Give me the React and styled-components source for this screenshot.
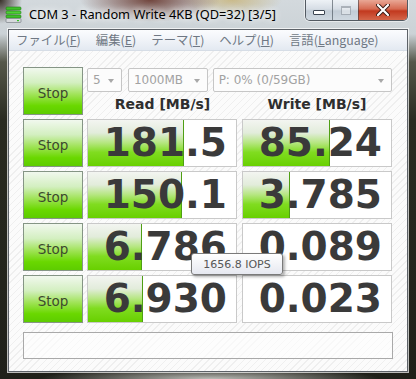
import React from 'react';
import styled, { createGlobalStyle } from 'styled-components';

const GlobalStyle = createGlobalStyle`
  html, body {
    margin: 0;
    padding: 0;
  }
  body {
    width: 416px;
    height: 379px;
    overflow: hidden;
    background: #26271e;
  }
`;

const Window = styled.div`
  position: relative;
  width: 416px;
  height: 379px;
  box-sizing: border-box;
  display: flex;
  flex-direction: column;
  font-family: "Noto Sans", "DejaVu Sans", sans-serif;
  background:
    radial-gradient(70px 22px at 150px 0, rgba(96, 44, 34, 0.85), rgba(96, 44, 34, 0)),
    radial-gradient(50px 16px at 232px 0, rgba(196, 166, 84, 0.6), rgba(196, 166, 84, 0)),
    radial-gradient(22px 24px at 0 0, rgba(40, 30, 22, 0.9), rgba(40, 30, 22, 0)),
    radial-gradient(170px 12px at 210px 379px, rgba(205, 205, 200, 0.9), rgba(205, 205, 200, 0)),
    linear-gradient(to bottom, #d3d9dd 0, #cbd2d6 34px, #55574a 62px, #2a2b21 120px, #1f2019 100%);
`;

const TitleBar = styled.div`
  height: 29px;
  display: flex;
  align-items: flex-start;
  flex-shrink: 0;
`;

const AppIcon = styled.svg`
  width: 17px;
  height: 17px;
  margin: 6px 0 0 5px;
`;

const TitleText = styled.div`
  margin: 5px 0 0 7px;
  font-size: 12.8px;
  line-height: 18px;
  color: #000;
  text-shadow: 0 0 6px rgba(255, 255, 255, 0.95), 0 0 10px rgba(255, 255, 255, 0.8);
  white-space: nowrap;
`;

const CaptionGroup = styled.div`
  margin-left: auto;
  margin-right: 8px;
  display: flex;
  height: 20px;
  border: 1px solid rgba(40, 48, 58, 0.75);
  border-top: none;
  border-radius: 0 0 5px 5px;
  overflow: hidden;
  box-shadow: 0 0 0 1px rgba(255, 255, 255, 0.5);
`;

const CaptionButton = styled.div`
  width: ${p => p.$w}px;
  display: flex;
  align-items: center;
  justify-content: center;
  border-left: ${p => (p.$first ? 'none' : '1px solid rgba(50, 60, 70, 0.55)')};
  background: ${p =>
    p.$close
      ? 'linear-gradient(to bottom, #e9a795 0%, #d66a52 45%, #c2391f 55%, #d4664a 100%)'
      : 'linear-gradient(to bottom, #eef2f6 0%, #d6dde5 45%, #c2ccd6 55%, #cfd8e0 100%)'};
`;

const MinGlyph = styled.div`
  width: 10px;
  height: 3px;
  margin-top: 5px;
  background: #fff;
  border: 1px solid #3b4450;
  border-radius: 1px;
`;

const MaxGlyph = styled.div`
  width: 8px;
  height: 6px;
  border: 1px solid rgba(120, 130, 140, 0.55);
  border-top-width: 2px;
  background: rgba(255, 255, 255, 0.35);
`;

const Client = styled.div`
  flex: 1;
  margin: 0 8px 7px 8px;
  display: flex;
  flex-direction: column;
  border: 1px solid #5d6268;
  box-shadow: 0 0 0 1px rgba(255, 255, 255, 0.7);
  min-height: 0;
`;

const MenuBar = styled.div`
  height: 20px;
  display: flex;
  align-items: center;
  gap: 15px;
  padding-left: 7px;
  background: linear-gradient(to bottom, #fbfcfe 0%, #f0f3f8 50%, #e3e9f1 100%);
  border-bottom: 1px solid #d6dde6;
  font-family: "Noto Sans CJK JP", "Noto Sans", sans-serif;
  font-size: 12.4px;
  color: #6f7884;
  flex-shrink: 0;
`;

const MenuItem = styled.span`
  white-space: nowrap;
  u {
    text-decoration: underline;
    text-underline-offset: 1px;
  }
`;

const Content = styled.div`
  flex: 1;
  padding: 16px 0 0 14px;
  background: repeating-linear-gradient(135deg, #fbfbfb 0px, #fbfbfb 4px, #efefef 4px, #efefef 5px);
`;

const Board = styled.div`
  display: grid;
  grid-template-columns: 60px 151px 150px;
  grid-auto-rows: 48px;
  column-gap: 4px;
  row-gap: 4px;
`;

const StopButton = styled.div`
  box-sizing: border-box;
  display: flex;
  align-items: center;
  justify-content: center;
  padding-top: 3px;
  border: 1px solid #859585;
  background: linear-gradient(to bottom, #f1f8ee 0%, #d3efc0 32%, #9fe356 58%, #6ad800 82%, #5dcc00 100%);
  color: #3d4a2e;
  font-family: "Comic Sans MS", "DejaVu Sans", sans-serif;
  font-size: 13.5px;
`;

const TopPanel = styled.div`
  grid-column: 2 / span 2;
  display: flex;
  flex-direction: column;
`;

const ComboRow = styled.div`
  display: flex;
  margin-top: 1px;
  height: 24px;
`;

const Combo = styled.div`
  box-sizing: border-box;
  width: ${p => p.$w}px;
  margin-left: ${p => p.$ml || 0}px;
  display: flex;
  align-items: center;
  padding: 0 0 0 5px;
  border: 1px solid #c6c6c6;
  border-radius: 2px;
  background: #fcfcfc;
  color: #a2a2a2;
  font-family: "DejaVu Sans", sans-serif;
  font-size: 12px;
  span {
    flex: 1;
    white-space: nowrap;
  }
  &::after {
    content: "";
    margin: 2px 7px 0 4px;
    border-left: 3.5px solid transparent;
    border-right: 3.5px solid transparent;
    border-top: 4px solid #a8a8a8;
  }
`;

const HeaderRow = styled.div`
  display: grid;
  grid-template-columns: 151px 150px;
  column-gap: 4px;
  margin-top: 4px;
`;

const Header = styled.div`
  text-align: center;
  font-family: "DejaVu Sans", sans-serif;
  font-weight: bold;
  font-size: 14px;
  line-height: 17px;
  color: #2e2e2e;
`;

const Cell = styled.div`
  box-sizing: border-box;
  width: 150px;
  border: 1px solid #c9c9c9;
  padding-right: 9px;
  text-align: right;
  font-family: "DejaVu Sans", sans-serif;
  font-weight: bold;
  font-size: 39px;
  line-height: 45px;
  color: #3a3a3a;
  background:
    linear-gradient(#4f9f14, #4f9f14) no-repeat ${p => Math.max(p.$fill - 1, 0)}px 0 / ${p => (p.$fill ? 1 : 0)}px 100%,
    linear-gradient(to bottom, #f3f5f1 0%, #e2ecdb 28%, #b4e67e 50%, #80dc20 70%, #68d000 100%) no-repeat 0 0 / ${p => p.$fill}px 100%,
    #ffffff;
`;

const StatusBox = styled.div`
  box-sizing: border-box;
  width: 370px;
  height: 27px;
  margin-top: 9px;
  border: 1px solid #a9a9a9;
  background: rgba(255, 255, 255, 0.55);
`;

const Tooltip = styled.div`
  position: absolute;
  left: 191px;
  top: 253px;
  box-sizing: border-box;
  width: 92px;
  height: 22px;
  display: flex;
  align-items: center;
  justify-content: center;
  border: 1px solid #7a7a7a;
  border-radius: 3px;
  background: linear-gradient(to bottom, #ffffff 0%, #e6e8f0 100%);
  box-shadow: 2px 2px 3px rgba(0, 0, 0, 0.3);
  color: #575757;
  font-family: "DejaVu Sans", sans-serif;
  font-size: 11px;
`;

const results = [
  { read: '181.5', readFill: 96, write: '85.24', writeFill: 87 },
  { read: '150.1', readFill: 94, write: '3.785', writeFill: 47 },
  { read: '6.786', readFill: 54, write: '0.089', writeFill: 0 },
  { read: '6.930', readFill: 55, write: '0.023', writeFill: 0 },
];

const menus = [
  ['ファイル(', 'F', ')'],
  ['編集(', 'E', ')'],
  ['テーマ(', 'T', ')'],
  ['ヘルプ(', 'H', ')'],
  ['言語(', 'L', 'anguage)'],
];

function App() {
  return (
    <>
      <GlobalStyle />
      <Window>
        <TitleBar>
          <AppIcon viewBox="0 0 17 17">
            <rect x="1" y="1" width="15" height="3" rx="1" fill="#3fbf2a" stroke="#1f7a16" strokeWidth="0.6" />
            <rect x="1" y="5" width="15" height="3" rx="1" fill="#4fd036" stroke="#1f7a16" strokeWidth="0.6" />
            <rect x="1" y="9" width="15" height="3" rx="1" fill="#3fbf2a" stroke="#1f7a16" strokeWidth="0.6" />
            <rect x="1" y="12.5" width="15" height="4" rx="1" fill="#d6d9dc" stroke="#6d7278" strokeWidth="0.6" />
            <rect x="12" y="14" width="2" height="1.2" fill="#36c02a" />
          </AppIcon>
          <TitleText>CDM 3 - Random Write 4KB (QD=32) [3/5]</TitleText>
          <CaptionGroup>
            <CaptionButton $w={26} $first>
              <MinGlyph />
            </CaptionButton>
            <CaptionButton $w={25}>
              <MaxGlyph />
            </CaptionButton>
            <CaptionButton $w={48} $close>
              <svg width="14" height="12" viewBox="0 0 14 12">
                <path d="M2 1 L12 11 M12 1 L2 11" stroke="#3a1a14" strokeWidth="4" strokeLinecap="round" />
                <path d="M2 1 L12 11 M12 1 L2 11" stroke="#ffffff" strokeWidth="2.2" strokeLinecap="round" />
              </svg>
            </CaptionButton>
          </CaptionGroup>
        </TitleBar>

        <Client>
          <MenuBar>
            {menus.map(([a, k, b]) => (
              <MenuItem key={a}>
                {a}
                <u>{k}</u>
                {b}
              </MenuItem>
            ))}
          </MenuBar>

          <Content>
            <Board>
              <StopButton>Stop</StopButton>
              <TopPanel>
                <ComboRow>
                  <Combo $w={35}><span>5</span></Combo>
                  <Combo $w={80} $ml={6}><span>1000MB</span></Combo>
                  <Combo $w={180} $ml={5}><span>P: 0% (0/59GB)</span></Combo>
                </ComboRow>
                <HeaderRow>
                  <Header>Read [MB/s]</Header>
                  <Header>Write [MB/s]</Header>
                </HeaderRow>
              </TopPanel>

              {results.map((r, i) => (
                <React.Fragment key={i}>
                  <StopButton>Stop</StopButton>
                  <Cell $fill={r.readFill}>{r.read}</Cell>
                  <Cell $fill={r.writeFill}>{r.write}</Cell>
                </React.Fragment>
              ))}
            </Board>
            <StatusBox />
          </Content>
        </Client>

        <Tooltip>1656.8 IOPS</Tooltip>
      </Window>
    </>
  );
}

export default App;
